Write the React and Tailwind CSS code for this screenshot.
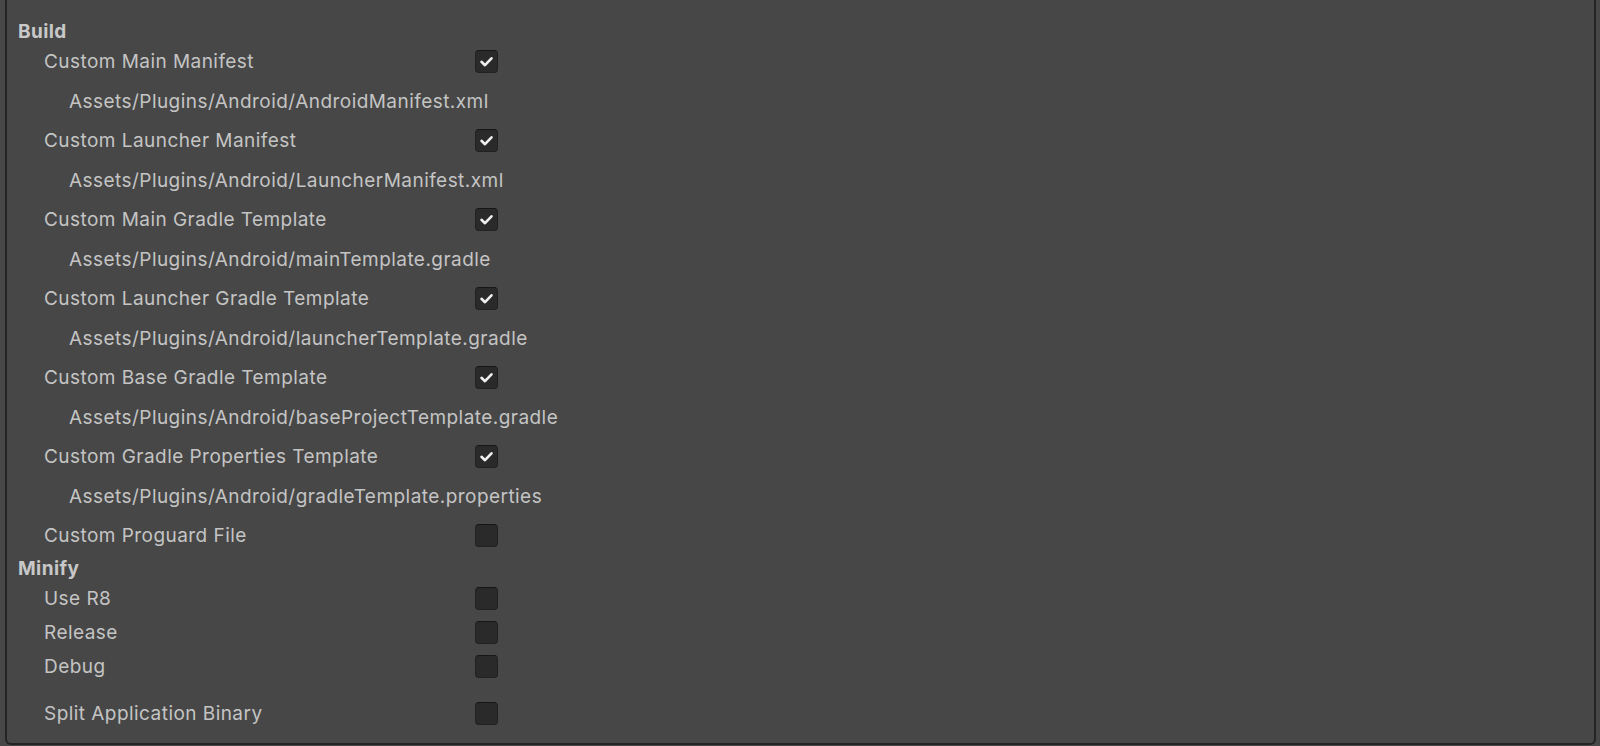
import React from "react";

const font = { fontFamily: "Inter, 'Noto Sans', sans-serif" };

function Check({ on }) {
  return (
    <div className="w-[23px] h-[23px] rounded-[4px] bg-[#2a2a2a] border border-[#212121] border-t-[#161616] flex items-center justify-center">
      {on && (
        <svg width="23" height="23" viewBox="0 0 23 23" className="-m-px">
          <polyline points="6.5,11.8 10,15.2 16.5,8.3" fill="none" stroke="#eeeeee" strokeWidth="2.6" strokeLinecap="round" strokeLinejoin="round" />
        </svg>
      )}
    </div>
  );
}

function Row({ label, on, h = "h-[39.5px]" }) {
  return (
    <div className={`${h} flex items-center`}>
      <div className="w-[468px] pl-[37px] text-[19px] tracking-[0.45px] text-[#c4c4c4] leading-none">{label}</div>
      <Check on={on} />
    </div>
  );
}

function PathRow({ text }) {
  return (
    <div className="h-[39.5px] flex items-center pl-[62px] text-[19px] tracking-[0.45px] text-[#c4c4c4] leading-none">{text}</div>
  );
}

export default function App() {
  const items = [
    ["Custom Main Manifest", "Assets/Plugins/Android/AndroidManifest.xml"],
    ["Custom Launcher Manifest", "Assets/Plugins/Android/LauncherManifest.xml"],
    ["Custom Main Gradle Template", "Assets/Plugins/Android/mainTemplate.gradle"],
    ["Custom Launcher Gradle Template", "Assets/Plugins/Android/launcherTemplate.gradle"],
    ["Custom Base Gradle Template", "Assets/Plugins/Android/baseProjectTemplate.gradle"],
    ["Custom Gradle Properties Template", "Assets/Plugins/Android/gradleTemplate.properties"],
  ];
  return (
    <div className="w-[1600px] h-[746px] bg-[#474747] overflow-hidden" style={font}>
      <div className="ml-[5px] mr-[4px] h-[745px] border-x-2 border-b-2 border-[#242424] rounded-b-[6px] bg-[#474747] pt-[20px]">
        <div className="h-[22px] flex items-center pl-[11px] text-[19px] tracking-[0.4px] font-bold text-[#c8c8c8] leading-none">Build</div>
        {items.map(([l, p]) => (
          <React.Fragment key={l}>
            <Row label={l} on />
            <PathRow text={p} />
          </React.Fragment>
        ))}
        <Row label="Custom Proguard File" on={false} />
        <div className="h-[26px] flex items-center pl-[11px] text-[19px] tracking-[0.4px] font-bold text-[#c8c8c8] leading-none">Minify</div>
        <Row label="Use R8" on={false} h="h-[34px]" />
        <Row label="Release" on={false} h="h-[34px]" />
        <Row label="Debug" on={false} h="h-[34px]" />
        <div className="h-[13px]" />
        <Row label="Split Application Binary" on={false} h="h-[34px]" />
      </div>
    </div>
  );
}
